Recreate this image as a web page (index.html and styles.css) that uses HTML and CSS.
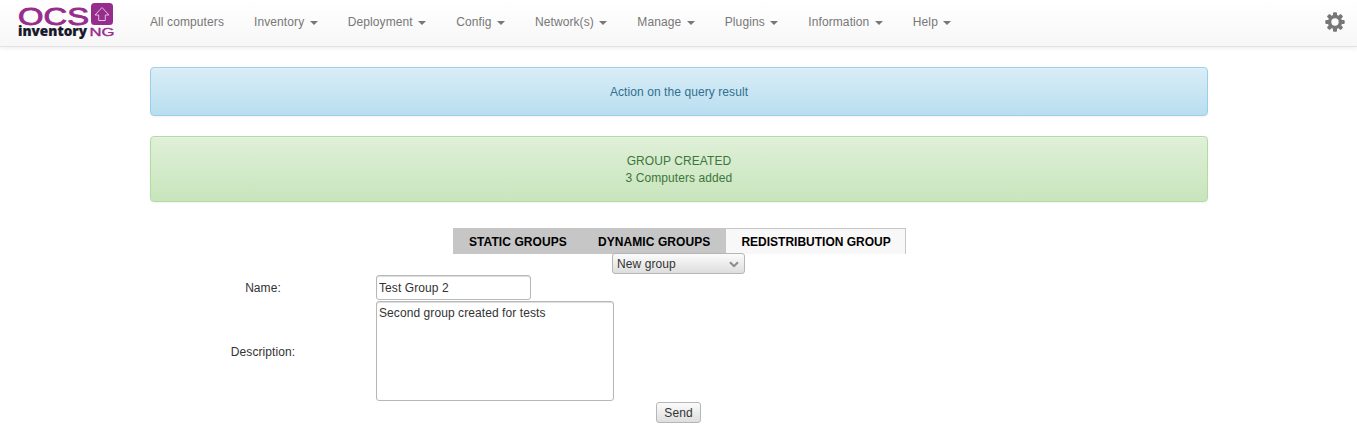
FILE: index.html
```html
<!DOCTYPE html>
<html lang="en">
<head>
<meta charset="utf-8">
<title>OCS Inventory</title>
<link rel="stylesheet" href="styles.css">
</head>
<body>
<header class="navbar">
  <a class="brand">
    <svg width="98" height="40" viewBox="0 0 98 40">
      <text class="logo-ocs" x="1" y="25.2" textLength="71" lengthAdjust="spacingAndGlyphs">OCS</text>
      <rect x="74" y="3" width="22" height="22" rx="3.5" fill="#962c8c"/>
      <path d="M85 7.5 92 15h-3.7v5.5h-6.6V15H78z" fill="none" stroke="#e3bfe0" stroke-width="1"/>
      <text class="logo-inventory" x="1" y="36" textLength="69" lengthAdjust="spacingAndGlyphs">inventory</text>
      <text class="logo-ng" x="72.5" y="36" textLength="25" lengthAdjust="spacingAndGlyphs">NG</text>
    </svg>
  </a>
  <nav class="menu">
    <a>All computers</a>
    <a>Inventory <b class="caret"></b></a>
    <a>Deployment <b class="caret"></b></a>
    <a>Config <b class="caret"></b></a>
    <a>Network(s) <b class="caret"></b></a>
    <a>Manage <b class="caret"></b></a>
    <a>Plugins <b class="caret"></b></a>
    <a>Information <b class="caret"></b></a>
    <a>Help <b class="caret"></b></a>
  </nav>
  <a class="settings">
    <svg width="20" height="20" viewBox="-10 -10 20 20" fill="#777">
      <g>
        <rect x="-2" y="-9.7" width="4" height="19.4" rx="1"/>
        <rect x="-2" y="-9.7" width="4" height="19.4" rx="1" transform="rotate(45)"/>
        <rect x="-2" y="-9.7" width="4" height="19.4" rx="1" transform="rotate(90)"/>
        <rect x="-2" y="-9.7" width="4" height="19.4" rx="1" transform="rotate(135)"/>
      </g>
      <circle r="7.2"/>
      <circle r="3.7" fill="#fbfbfb"/>
    </svg>
  </a>
</header>
<main class="container">
  <div class="alert alert-info">Action on the query result</div>
  <div class="alert alert-success">GROUP CREATED<br>3 Computers added</div>
  <div class="tabs">
    <a class="tab">STATIC GROUPS</a>
    <a class="tab">DYNAMIC GROUPS</a>
    <a class="tab active">REDISTRIBUTION GROUP</a>
  </div>
  <form class="form">
    <div class="select">New group
      <svg width="10" height="7" viewBox="0 0 10 7"><path d="M1 1.2 5 5.2 9 1.2" fill="none" stroke="#8a8a8a" stroke-width="2"/></svg>
    </div>
    <div class="fields">
      <label class="label">Name:</label>
      <input class="field name" type="text" value="Test Group 2">
      <label class="label">Description:</label>
      <textarea class="field description">Second group created for tests</textarea>
    </div>
    <button class="send" type="button">Send</button>
  </form>
</main>
</body>
</html>
```
FILE: styles.css
```css
* { box-sizing: border-box; }
body {
  margin: 0;
  background: #fff;
  color: #333;
  font: 12px/17px "Liberation Sans", Arial, sans-serif;
  letter-spacing: .08px;
}
.navbar {
  display: flex;
  height: 47px;
  border-bottom: 1px solid #e2e2e2;
  background: linear-gradient(#fff, #f7f7f7);
  box-shadow: 0 1px 5px rgba(0, 0, 0, .08);
}
.brand { width: 118px; margin-left: 17px; letter-spacing: 0; }
.brand svg { display: block; }
.logo-ocs { font: 23.5px "Liberation Sans", sans-serif; fill: #962c8c; stroke: #962c8c; stroke-width: .8; }
.logo-inventory { font: 800 14px "Open Sans", sans-serif; fill: #17182b; stroke: #17182b; stroke-width: .2; }
.logo-ng { font: 10px "Liberation Sans", sans-serif; fill: #962c8c; stroke: #962c8c; stroke-width: .3; }
.menu { display: flex; letter-spacing: .1px; }
.menu a { padding: 14px 15px; color: #777; white-space: nowrap; }
.caret {
  display: inline-block;
  margin-left: 2px;
  vertical-align: middle;
  border-top: 4px solid #777;
  border-right: 4px solid transparent;
  border-left: 4px solid transparent;
}
.settings { margin: 12px 12px 0 auto; }
.settings svg { display: block; }
.container { width: 1058px; margin: 20px 0 0 150px; }
.alert {
  margin-bottom: 20px;
  padding: 16px 15px 14px;
  border: 1px solid;
  border-radius: 4px;
  text-align: center;
  box-shadow: inset 0 1px 0 rgba(255, 255, 255, .25), 0 1px 2px rgba(0, 0, 0, .05);
}
.alert-info { border-color: #9acfea; background: linear-gradient(#d9edf7, #b9def0); color: #31708f; }
.alert-success { border-color: #b2dba1; background: linear-gradient(#dff0d8, #c8e5bc); color: #3c763d; }
.tabs {
  display: flex;
  width: 453px;
  height: 26px;
  margin: 26px 0 0 303px;
  background: #c6c6c6;
  color: #000;
  font-weight: bold;
  white-space: nowrap;
}
.tab { padding: 6px 15px 3px 16px; }
.tab.active {
  flex: 1;
  margin-left: 1px;
  padding: 5px 0 3px 15px;
  border: solid #c6c6c6;
  border-width: 1px 1px 0 0;
  background: #f8f8f8;
  letter-spacing: 0;
}
.form { display: flex; flex-direction: column; }
.select, .send {
  border: 1px solid #b6b6b6;
  border-radius: 3px;
  background: linear-gradient(#fbfbfb, #dedede);
  color: #333;
  font: inherit;
  letter-spacing: inherit;
}
.select {
  display: flex;
  align-items: center;
  justify-content: space-between;
  width: 133px;
  height: 21px;
  margin: -1px 0 1px 462px;
  padding: 1px 5px 0 4px;
}
.fields {
  display: grid;
  grid-template: 25px 100px / 226px 1fr;
  row-gap: 1px;
  align-items: center;
}
.label { padding-top: 2px; text-align: center; }
.field {
  display: block;
  margin: 0;
  padding: 2px;
  border: 1px solid #b4b8b6;
  border-radius: 3px;
  background: #fff;
  box-shadow: inset 0 1px 1px #ddd;
  color: #333;
  font: inherit;
  letter-spacing: inherit;
  resize: none;
}
.name { width: 155px; height: 25px; }
.description { width: 238px; height: 100px; padding-top: 3px; }
.send { width: 45px; height: 21px; margin: 1px 0 0 506px; padding: 2px 0 0; }
```
